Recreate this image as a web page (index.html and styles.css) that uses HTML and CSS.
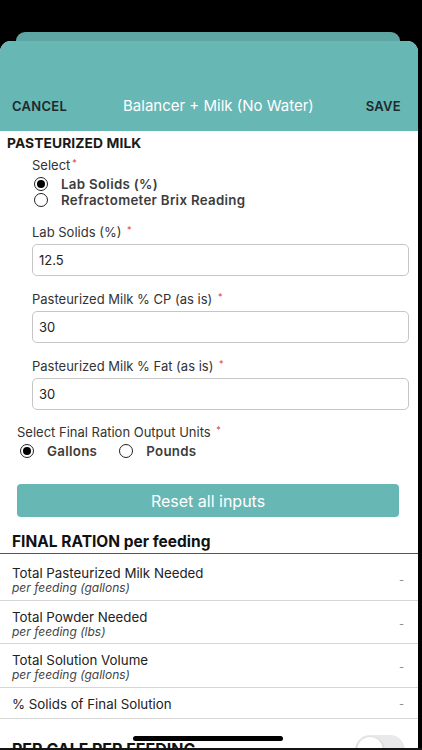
FILE: index.html
```html
<!DOCTYPE html>
<html lang="en">
<head>
<meta charset="utf-8">
<title>Balancer + Milk (No Water)</title>
<link rel="stylesheet" href="styles.css">
</head>
<body>
<div class="screen">
  <div class="back-card"></div>
  <div class="sheet">
    <header class="header">
      <span class="hbtn">CANCEL</span>
      <span class="htitle">Balancer + Milk (No Water)</span>
      <span class="hbtn">SAVE</span>
    </header>

    <section class="form">
      <h2 class="section-title">PASTEURIZED MILK</h2>
      <div class="group">
        <div class="label">Select<span class="req">*</span></div>
        <div class="radio-col">
          <div class="radio-row"><span class="radio on"></span><span class="rlabel">Lab Solids (%)</span></div>
          <div class="radio-row"><span class="radio"></span><span class="rlabel">Refractometer Brix Reading</span></div>
        </div>
      </div>

      <div class="field first">
        <div class="label">Lab Solids (%) <span class="req">*</span></div>
        <div class="input">12.5</div>
      </div>
      <div class="field">
        <div class="label">Pasteurized Milk % CP (as is) <span class="req">*</span></div>
        <div class="input">30</div>
      </div>
      <div class="field">
        <div class="label">Pasteurized Milk % Fat (as is) <span class="req">*</span></div>
        <div class="input">30</div>
      </div>

      <div class="units">
        <div class="label">Select Final Ration Output Units <span class="req">*</span></div>
        <div class="radio-line">
          <div class="radio-row"><span class="radio on"></span><span class="rlabel">Gallons</span></div>
          <div class="radio-row"><span class="radio"></span><span class="rlabel">Pounds</span></div>
        </div>
      </div>

      <div class="reset">Reset all inputs</div>
    </section>

    <h2 class="final-title">FINAL RATION per feeding</h2>
    <div class="results">
      <div class="rrow">
        <div class="rtext"><div class="rname">Total Pasteurized Milk Needed</div><div class="rsub">per feeding (gallons)</div></div>
        <span class="rval">-</span>
      </div>
      <div class="rrow">
        <div class="rtext"><div class="rname">Total Powder Needed</div><div class="rsub">per feeding (lbs)</div></div>
        <span class="rval">-</span>
      </div>
      <div class="rrow">
        <div class="rtext"><div class="rname">Total Solution Volume</div><div class="rsub">per feeding (gallons)</div></div>
        <span class="rval">-</span>
      </div>
      <div class="rrow single">
        <div class="rtext"><div class="rname">% Solids of Final Solution</div></div>
        <span class="rval">-</span>
      </div>
    </div>

    <div class="calf">
      <h2 class="calf-title">PER CALF PER FEEDING</h2>
      <span class="toggle"><span class="knob"></span></span>
    </div>
  </div>
  <div class="home-indicator"></div>
</div>
</body>
</html>
```
FILE: styles.css
```css
* { box-sizing: border-box; }
html, body { margin: 0; padding: 0; }
body {
  background: #141414;
  font-family: "Inter", "Liberation Sans", Arial, sans-serif;
  color: #2b2b2b;
  width: 422px;
  height: 750px;
  overflow: hidden;
}
.screen {
  position: relative;
  height: 748px;
  background: #000;
  padding-top: 32px;
  padding-right: 4px;
  display: flex;
  flex-direction: column;
}
.back-card {
  height: 9px;
  margin: 0 18px 0 16px;
  background: #5ea6a4;
  border-radius: 9px 9px 0 0;
  flex: none;
}
.sheet {
  flex: 1;
  min-height: 0;
  background: #fff;
  border-radius: 11px 11px 0 0;
  overflow: hidden;
}
.header {
  height: 90px;
  background: #67b7b5;
  display: flex;
  align-items: flex-end;
  padding: 0 17px 15px 12px;
}
.hbtn {
  font-size: 13px;
  font-weight: 600;
  color: #1d2a2c;
  line-height: 20px;
  letter-spacing: 0.3px;
}
.htitle {
  flex: 1;
  text-align: center;
  color: #fff;
  font-size: 15px;
  line-height: 20px;
  padding-left: 4px;
}
.section-title {
  margin: 0;
  padding: 3px 0 0 7px;
  font-size: 13.8px;
  font-weight: 700;
  line-height: 18px;
  color: #1a1a1a;
  letter-spacing: 0.1px;
}
.label {
  font-size: 13px;
  line-height: 18px;
  height: 18px;
  color: #333;
}
.req {
  color: #e0363b;
  font-size: 9px;
  line-height: 0;
  vertical-align: 4px;
  margin-left: 2px;
}
.group { padding: 4px 0 0 32px; }
.radio-col { display: flex; flex-direction: column; padding-top: 2px; margin-left: 2px; }
.radio-row {
  display: flex;
  align-items: center;
  height: 16px;
}
.radio {
  width: 14px;
  height: 14px;
  border: 1.5px solid #222;
  border-radius: 50%;
  display: flex;
  align-items: center;
  justify-content: center;
  margin-right: 13px;
  flex: none;
}
.radio.on::after {
  content: "";
  width: 8px;
  height: 8px;
  border-radius: 50%;
  background: #000;
}
.rlabel {
  font-size: 13.3px;
  font-weight: 600;
  color: #3d3d3d;
  letter-spacing: 0.3px;
}
.field { padding: 14px 9px 0 32px; }
.field.first { padding-top: 15px; }
.input {
  margin-top: 3px;
  height: 32px;
  border: 1px solid #c6c6c6;
  border-radius: 5px;
  padding: 0 6px;
  display: flex;
  align-items: center;
  font-size: 13px;
  color: #222;
}
.units { padding: 13px 0 0 17px; }
.radio-line { display: flex; gap: 22px; padding-top: 2px; margin-left: 3px; }
.reset {
  margin: 25px 19px 0 17px;
  height: 33px;
  background: #67b7b5;
  border-radius: 4px;
  color: #fff;
  font-size: 16px;
  display: flex;
  align-items: center;
  justify-content: center;
}
.final-title {
  margin: 15px 0 0;
  padding: 0 0 1px 12px;
  font-size: 15.5px;
  font-weight: 700;
  line-height: 20px;
  color: #111;
  border-bottom: 1.5px solid #555;
}
.results { padding-top: 3px; }
.rrow {
  display: flex;
  align-items: center;
  padding: 8px 14px 4.6px 12px;
  border-bottom: 1px solid #d6d6d6;
}
.rrow.single { padding-bottom: 6px; }
.rtext { flex: 1; }
.rname { font-size: 13.3px; line-height: 16px; color: #222; }
.rsub { font-size: 12px; line-height: 14px; font-style: italic; color: #444; }
.rval { font-size: 11px; color: #888; }
.calf {
  display: flex;
  justify-content: space-between;
  align-items: flex-start;
  padding: 16px 13px 0 12px;
}
.calf-title {
  margin: 4px 0 0;
  font-size: 16px;
  font-weight: 700;
  line-height: 20px;
  color: #111;
}
.toggle {
  width: 50px;
  height: 30px;
  border-radius: 15px;
  background: #e9e9eb;
  position: relative;
  flex: none;
}
.knob {
  position: absolute;
  left: 2px;
  top: 2px;
  width: 26px;
  height: 26px;
  border-radius: 50%;
  background: #fff;
  box-shadow: 0 1px 3px rgba(0,0,0,0.25);
}
.home-indicator {
  position: absolute;
  left: 133px;
  top: 736px;
  width: 150px;
  height: 5px;
  border-radius: 3px;
  background: #000;
}
```
